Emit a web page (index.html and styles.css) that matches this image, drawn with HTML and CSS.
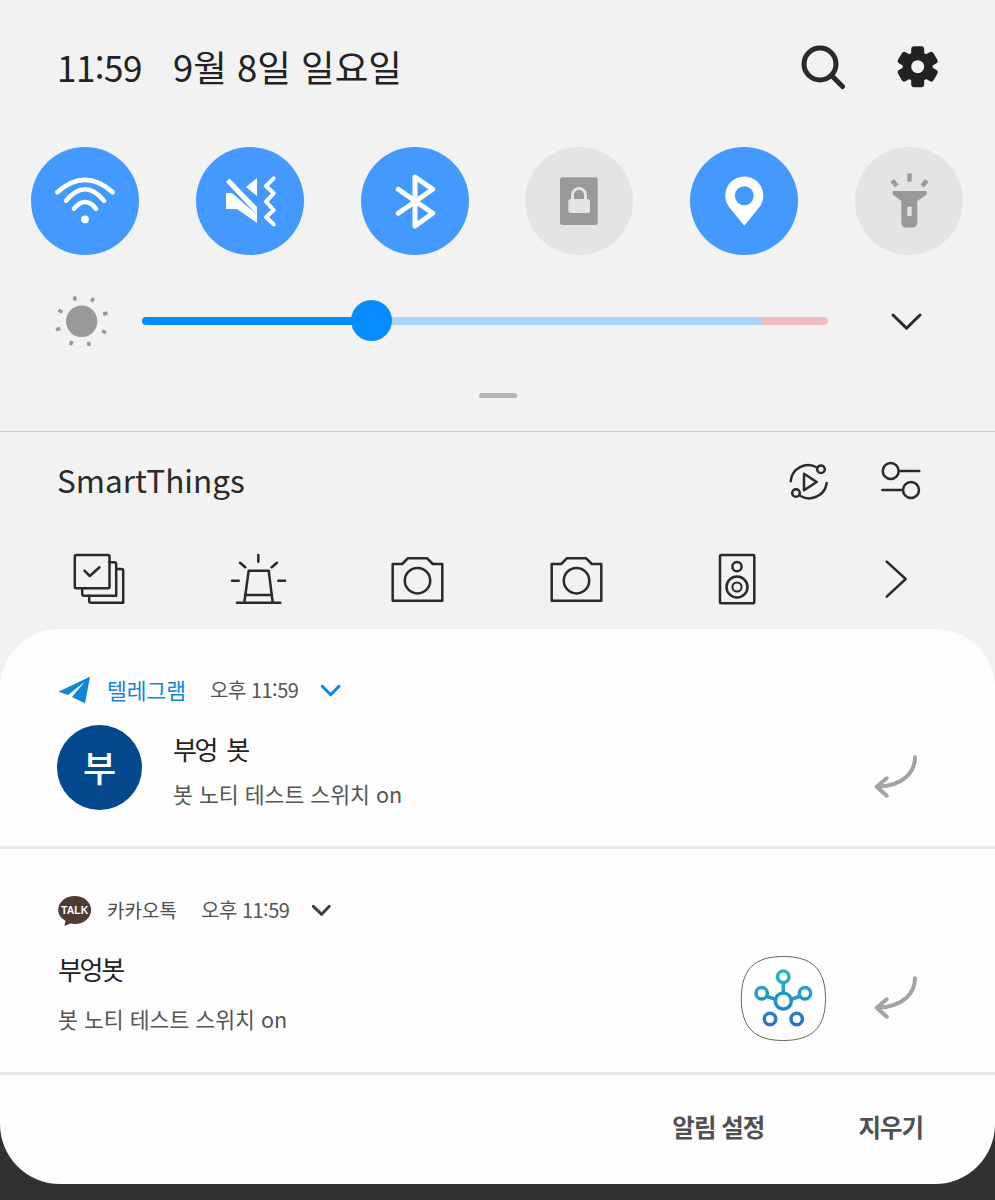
FILE: index.html
```html
<!DOCTYPE html>
<html lang="ko">
<head>
<meta charset="utf-8">
<title>Quick panel</title>
<link rel="stylesheet" href="styles.css">
</head>
<body>
<div class="screen">
  <header class="topbar">
    <div class="clock"><span class="time">11:59</span><span class="date">9월 8일 일요일</span></div>
    <div class="top-actions">
      <svg class="i48" viewBox="798 43 48 48"><circle class="ln-dark thick" cx="820" cy="64" r="16"/><path class="ln-dark thick" d="M832 76l10.500 10.500"/></svg>
      <svg class="i48" viewBox="894 43 48 48">
        <g class="fill-dark" transform="translate(917.700 66.700)">
          <circle r="15"/>
          <rect x="-6.500" y="-20.500" width="13" height="41" rx="3"/>
          <rect x="-6.500" y="-20.500" width="13" height="41" rx="3" transform="rotate(60)"/>
          <rect x="-6.500" y="-20.500" width="13" height="41" rx="3" transform="rotate(120)"/>
          <circle class="fill-bg" r="6.500"/>
        </g>
      </svg>
    </div>
  </header>

  <section class="toggles">
    <svg class="toggle on" viewBox="0 0 108 108"><circle class="disc" cx="54" cy="54" r="54"/>
      <circle class="fill-w" cx="54" cy="72.300" r="3.900"/>
      <path class="ln-w w45" d="M26.300 45.300Q54 20.500 81.700 45.300M35 53.700Q54 31 73 53.700M43 61.700Q54 48.500 65 61.700"/>
    </svg>
    <svg class="toggle on" viewBox="0 0 108 108"><circle class="disc" cx="54" cy="54" r="54"/>
      <path class="fill-w" d="M30 46h6L61 68v8L41 62H30zM50 40L61 31V49z"/>
      <path class="fill-w" d="M33.500 31.500L61 60v8L30 35z"/>
      <path class="ln-w w4" d="M77.700 31.300L70 39l7.700 7.300L70 54.700l7.700 8.300L70 70.300l7.700 7"/>
    </svg>
    <svg class="toggle on" viewBox="0 0 108 108"><circle class="disc" cx="54" cy="54" r="54"/>
      <path class="ln-w w5" d="M37.300 42.300L71.700 66.300 54 79V30L71.700 42.300 37.300 66.300"/>
    </svg>
    <svg class="toggle off" viewBox="0 0 108 108"><circle class="disc-off" cx="54" cy="54" r="54"/>
      <rect class="fill-g" x="35" y="30.300" width="37.700" height="47.700" rx="2.500"/>
      <rect class="fill-off" x="43.300" y="52" width="21.700" height="14" rx="2.500"/>
      <path class="ln-off w3" d="M47.500 54v-6a6.500 6.500 0 0 1 13 0v6"/>
    </svg>
    <svg class="toggle on" viewBox="0 0 108 108"><circle class="disc" cx="54" cy="54" r="54"/>
      <path class="fill-w" d="M54.300 29.500c10.500 0 19 8.500 19 19 0 5.500-2 9.500-5 13L54.300 78.700 40.300 61.500c-3-3.500-5-7.500-5-13 0-10.500 8.500-19 19-19z"/>
      <circle class="disc" cx="54.300" cy="48.700" r="9.500"/>
    </svg>
    <svg class="toggle off" viewBox="0 0 108 108"><circle class="disc-off" cx="54" cy="54" r="54"/>
      <path class="fill-g" d="M37.700 44H71.700V47.500L62.300 54V76a4.500 4.500 0 0 1-4.500 4.500H50.800A4.500 4.500 0 0 1 46.300 76V54L37.700 47.500z"/>
      <rect class="fill-off" x="52.300" y="59.700" width="4.400" height="9.300"/>
      <rect class="fill-g" x="52.300" y="26.300" width="4.400" height="8.400"/>
      <rect class="fill-g" x="37" y="33" width="4.600" height="7" transform="rotate(-40 39 36)"/>
      <rect class="fill-g" x="67.500" y="33" width="4.600" height="7" transform="rotate(40 70 36)"/>
    </svg>
  </section>

  <section class="brightness">
    <svg class="sun" viewBox="54 292 56 56">
      <circle class="fill-g" cx="81.700" cy="320.300" r="15.700"/>
      <g class="ray">
        <path d="M74.500 295.500l.8 4.200"/><path d="M93.500 297l-2 3.600"/><path d="M107.500 312l-4.300 1.300"/><path d="M106 332l-3.800-2.200"/>
        <path d="M89.300 345l-.9-4.200"/><path d="M70.500 344l1.500-4"/><path d="M56 328.700l4.300-1.200"/><path d="M58.500 309l3.800 2.200"/>
      </g>
    </svg>
    <div class="track">
      <div class="track-done"></div>
      <div class="track-rest"></div>
      <div class="track-warn"></div>
      <div class="thumb"></div>
    </div>
    <svg class="chev" viewBox="888 308 36 26"><path class="ln-dark w3" d="M893 315l13.500 13.300L920 315"/></svg>
  </section>

  <div class="handle"></div>
  <div class="rule"></div>

  <section class="st-head">
    <h2 class="st-title">SmartThings</h2>
    <div class="st-actions">
      <svg class="i48" viewBox="784 455 48 48">
        <path class="ln-dark w25" d="M790.700 479.300A17.600 17.600 0 0 1 817 465.500M826.700 481A17.600 17.600 0 0 1 800.500 494"/>
        <circle class="ln-dark w25" cx="821" cy="467.300" r="3.800"/>
        <circle class="ln-dark w25" cx="796" cy="491" r="3.800"/>
        <path class="ln-dark w25" d="M804 471.700L816.700 480 804 488.300z"/>
      </svg>
      <svg class="i48" viewBox="877 456 48 48">
        <circle class="ln-dark w25" cx="890.700" cy="470" r="8"/>
        <path class="ln-dark w25" d="M899 470h20.300"/>
        <circle class="ln-dark w25" cx="911" cy="489" r="8"/>
        <path class="ln-dark w25" d="M882.300 489h20.500"/>
      </svg>
    </div>
  </section>

  <section class="st-devices">
    <svg class="i60" viewBox="68.500 550 60 60">
      <rect class="ln-dark w25" x="74.300" y="555" width="34.700" height="33.300" rx="1.500"/>
      <path class="ln-dark w25" d="M109 562.300h4.700a2 2 0 0 1 2 2v31.400H83.700a2 2 0 0 1-2-2v-5.400"/>
      <path class="ln-dark w25" d="M115.700 569h5a2 2 0 0 1 2 2v31.700H90.700a2 2 0 0 1-2-2v-5"/>
      <path class="ln-dark w25" d="M84 570.700l5.300 5.300 9.700-8.700"/>
    </svg>
    <svg class="i60" viewBox="227 550 60 60">
      <path class="ln-dark w25" d="M236 602.700h43.300M243.300 602.700L247.700 570.700h20L271.700 602.700M244 595h27M257.300 555v6.700M239 562.700l5.300 4.600M276 562.700l-5.300 4.600M231 580.700h6.700M277.300 580.700h6.700"/>
    </svg>
    <svg class="i60" viewBox="387 550 60 60">
      <path class="ln-dark w25" d="M391.700 564h9.500l5.600-5.700h19.400l5.600 5.700h9.500v36.700h-49.600z"/>
      <circle class="ln-dark w25" cx="416.500" cy="580.700" r="12.700"/>
    </svg>
    <svg class="i60" viewBox="546.300 550 60 60">
      <path class="ln-dark w25" d="M551 564h9.500l5.600-5.700h19.400l5.600 5.700h9.500v36.700h-49.600z"/>
      <circle class="ln-dark w25" cx="575.800" cy="580.700" r="12.700"/>
    </svg>
    <svg class="i60" viewBox="706 550 60 60">
      <rect class="ln-dark w25" x="719" y="555" width="34.300" height="48.300" rx="1"/>
      <circle class="ln-dark w25" cx="736" cy="566.700" r="4.600"/>
      <circle class="ln-dark w25" cx="736" cy="587" r="10.500"/>
      <circle class="ln-dark w2" cx="736" cy="587" r="4.600"/>
    </svg>
    <svg class="i60" viewBox="866 550 60 60"><path class="ln-dark w25" d="M886.700 561.700L905.700 579 886.700 596.700"/></svg>
  </section>

  <main class="card">
    <article class="notif notif-tg">
      <div class="n-head">
        <svg class="app-ico" viewBox="56 674 36 32"><path class="fill-tg" d="M58.300 691.700L90 676.700 85 703.300 72 697 84.500 682 68 695z"/></svg>
        <span class="app-name tg">텔레그램</span>
        <span class="n-time">오후 11:59</span>
        <svg class="n-chev" viewBox="320 684 22 18"><path class="ln-tg w3" d="M322.300 689.300l8.400 8.400 8.300-8.400"/></svg>
      </div>
      <div class="n-body">
        <div class="avatar">부</div>
        <div class="n-text">
          <div class="n-title spaced">부엉 봇</div>
          <div class="n-msg">봇 노티 테스트 스위치 on</div>
        </div>
        <svg class="reply" viewBox="873 753 46 46"><path class="ln-reply" d="M915 757.300c0 14-11 29-38 29.400M886.700 778.300l-10 8.400 10 9"/></svg>
      </div>
    </article>

    <article class="notif notif-ka">
      <div class="n-head">
        <svg class="app-ico" viewBox="56 892 36 32">
          <path class="fill-ka" d="M74.700 894c9.100 0 16.500 6.200 16.500 14s-7.400 14-16.500 14c-1.500 0-3-.2-4.300-.5L64.300 924l1.300-5.200C61 916.300 58.200 912.500 58.200 908c0-7.800 7.400-14 16.500-14z"/>
          <text class="talk" x="74.700" y="911.500">TALK</text>
        </svg>
        <span class="app-name ka">카카오톡</span>
        <span class="n-time">오후 11:59</span>
        <svg class="n-chev" viewBox="311 904 22 18"><path class="ln-ka w3" d="M313.300 909.300l8.400 8 7.600-8"/></svg>
      </div>
      <div class="n-body2">
        <div class="n-text">
          <div class="n-title">부엉봇</div>
          <div class="n-msg gap2">봇 노티 테스트 스위치 on</div>
        </div>
        <svg class="app-thumb" viewBox="740 955 87 87">
          <defs>
            <linearGradient id="stg" gradientUnits="userSpaceOnUse" x1="783" y1="970" x2="783" y2="1025">
              <stop offset="0" stop-color="#22bcc0"/><stop offset="1" stop-color="#2b6fc6"/>
            </linearGradient>
          </defs>
          <path class="squircle" d="M783.300 956.500c28 0 42.200 12 42.200 42s-14.200 42-42.200 42-42-12-42-42 14-42 42-42z"/>
          <path class="ln-net" d="M783.300 983v10M767 996.500l9 3M799 996.500l-8 3"/>
          <circle class="ln-net" cx="783.300" cy="1001" r="8"/>
          <circle class="ln-net" cx="783.300" cy="976.700" r="5.700"/>
          <circle class="ln-net" cx="761.700" cy="993.300" r="5.700"/>
          <circle class="ln-net" cx="805" cy="993.300" r="5.700"/>
          <circle class="ln-net" cx="770" cy="1019" r="5.700"/>
          <circle class="ln-net" cx="796.700" cy="1019" r="5.700"/>
        </svg>
        <svg class="reply reply2" viewBox="873 974 46 46"><path class="ln-reply" d="M915 978.300c0 14-11 29-38 29.400M886.700 999.300l-10 8.400 10 9"/></svg>
      </div>
    </article>

    <footer class="n-foot">
      <span class="foot-btn">알림 설정</span>
      <span class="foot-btn">지우기</span>
    </footer>
  </main>
</div>
</body>
</html>
```

FILE: styles.css
```css
* { box-sizing: border-box; }
html, body { margin: 0; padding: 0; }
body {
  width: 995px;
  height: 1200px;
  overflow: hidden;
  font-family: "Noto Sans CJK KR", "Noto Sans", sans-serif;
  background: linear-gradient(#f2f2f2 700px, #303133 700px);
  color: #222;
}
.screen { width: 995px; height: 1200px; display: flex; flex-direction: column; }
svg { display: block; flex: none; fill: none; }

.topbar { height: 147px; padding: 0 53px 13px 57px; display: flex; align-items: center; justify-content: space-between; }
.clock { display: flex; align-items: baseline; color: #222; }
.time { font-size: 35px; line-height: 48px; width: 116px; letter-spacing: -0.500px; }
.date { font-size: 36.500px; line-height: 48px; }
.top-actions { display: flex; gap: 48px; }
.i48 { width: 48px; height: 48px; }
.i60 { width: 60px; height: 60px; margin: 0 auto; }

.toggles { height: 108px; padding: 0 32px 0 31px; display: flex; justify-content: space-between; }
.toggle { width: 108px; height: 108px; }
.disc { fill: #4499ff; }
.disc-off { fill: #e4e4e4; }
.fill-w { fill: #fff; }
.fill-g { fill: #999; }
.fill-off { fill: #e4e4e4; }
.fill-dark { fill: #222; }
.fill-bg { fill: #f2f2f2; }
.fill-tg { fill: #0f86d6; }
.fill-ka { fill: #4e3c33; }

.ln-w, .ln-off, .ln-dark, .ln-tg, .ln-ka, .ln-reply, .ln-net { fill: none; stroke-linecap: round; stroke-linejoin: round; }
.ln-w { stroke: #fff; }
.ln-off { stroke: #e4e4e4; }
.ln-dark { stroke: #2a2a2a; }
.ln-tg { stroke: #0f86d6; }
.ln-ka { stroke: #4e3c33; }
.ln-reply { stroke: #a3a3a3; stroke-width: 4; }
.ln-net { stroke: url(#stg); stroke-width: 3.500; }
.w2 { stroke-width: 2; }
.w25 { stroke-width: 2.500; }
.w3 { stroke-width: 3; }
.w4 { stroke-width: 4; }
.w45 { stroke-width: 4.500; }
.w5 { stroke-width: 5; }
.thick { stroke-width: 5; }

.brightness { margin-top: 45px; height: 41px; padding-left: 54px; display: flex; align-items: center; }
.sun { width: 56px; height: 56px; margin: 0 32px 0 0; }
.ray path { stroke: #999; stroke-width: 3.500; fill: none; }
.track { width: 686px; height: 8px; display: flex; position: relative; border-radius: 4px; }
.track-done { width: 229px; background: #078cff; border-radius: 4px 0 0 4px; }
.track-rest { width: 390px; background: #a9d3f8; }
.track-warn { width: 67px; background: #f3bdbd; border-radius: 0 4px 4px 0; }
.thumb { position: absolute; left: 208.700px; top: -16.500px; width: 41px; height: 41px; border-radius: 50%; background: #078cff; }
.chev { width: 36px; height: 26px; margin-left: 60px; }

.handle { margin: 52px auto 0; width: 38px; height: 5px; border-radius: 3px; background: #b4b4b4; }
.rule { margin-top: 33px; height: 1px; background: #cfcfcf; }

.st-head { height: 98px; padding: 0 70px 4px 57px; display: flex; align-items: center; justify-content: space-between; }
.st-title { margin: 0; font-size: 31.500px; line-height: 40px; font-weight: 400; color: #2a2a2a; }
.st-actions { display: flex; gap: 45px; margin-bottom: -4px; }

.st-devices { margin-top: 20px; height: 60px; padding-left: 19px; display: grid; grid-template-columns: repeat(6, 159.500px); }

.card { margin-top: 19px; height: 555px; background: #fdfdfd; border-radius: 60px; display: flex; flex-direction: column; overflow: hidden; }
.notif { padding: 46px 76px 0 58px; border-bottom: 3px solid #e8e8e8; }
.notif-tg { height: 220px; }
.notif-ka { height: 226px; }
.n-head { height: 30px; display: flex; align-items: center; }
.app-ico { width: 36px; height: 32px; margin: 0 15px 0 -2px; }
.app-name { font-size: 21.500px; line-height: 30px; }
.app-name.tg { color: #0f86d6; width: 103px; }
.app-name.ka { color: #4d4d4d; font-size: 19px; width: 94px; }
.n-time { font-size: 20px; line-height: 30px; color: #555; width: 110px; letter-spacing: -0.500px; }
.n-chev { width: 22px; height: 18px; }
.n-body { margin-top: 20px; display: flex; align-items: flex-start; }
.avatar { width: 85px; height: 85px; margin-left: -1px; border-radius: 50%; background: #04498e; color: #fff; font-size: 36px; font-weight: 500; line-height: 83px; text-align: center; }
.notif-tg .n-text { margin-left: 31px; padding-top: 4px; }
.n-title { font-size: 26px; line-height: 40px; color: #222; letter-spacing: -2.300px; font-weight: 400; }
.n-title.spaced { word-spacing: 5px; }
.n-msg { margin-top: 10px; font-size: 21.600px; line-height: 30px; color: #555; }
.n-msg.gap2 { margin-top: 15px; }
.reply { width: 46px; height: 46px; margin-left: auto; margin-top: 28px; }
.n-body2 { margin-top: 24px; display: flex; align-items: flex-start; }
.app-thumb { width: 87px; height: 87px; margin-left: auto; margin-top: 6px; }
.squircle { fill: #fdfdfd; stroke: #666; stroke-width: 1; }
.reply2 { margin-left: 46px; margin-top: 25px; }
.talk { fill: #fff; font-family: "Liberation Sans", sans-serif; font-size: 10.500px; font-weight: 700; text-anchor: middle; }

.n-foot { flex: 1; display: flex; align-items: center; justify-content: flex-end; gap: 94px; padding: 0 72px 6px 0; }
.foot-btn { font-size: 24.500px; line-height: 40px; font-weight: 700; color: #505050; letter-spacing: -1px; }
```
